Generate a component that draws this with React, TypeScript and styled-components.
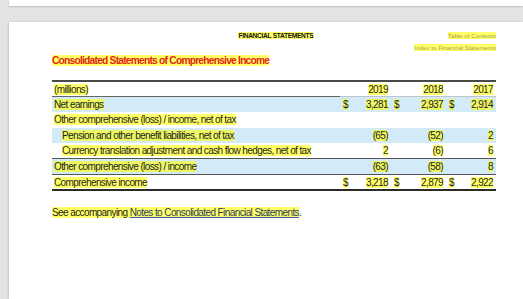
import React from "react";
import styled, { createGlobalStyle } from "styled-components";

const Global = createGlobalStyle`
  html, body { margin: 0; padding: 0; background: #e4e4e4; }
  body { font-family: "Liberation Sans", Arial, sans-serif; color: #1e1e1e; overflow: hidden; }
`;

const Desk = styled.div`
  width: 523px;
  height: 299px;
  display: flex;
  flex-direction: column;
  overflow: hidden;
`;

const PrevPage = styled.div`
  height: 6px;
  margin-left: 9px;
  background: #fff;
  box-shadow: 0 1px 2px rgba(0,0,0,0.18);
`;

const Page = styled.div`
  flex: 1;
  margin-top: 16px;
  margin-left: 9px;
  background: #fff;
  box-shadow: -1px 0 2px rgba(0,0,0,0.15);
  padding: 8px 27px 0 43px;
`;

const HL = styled.span`
  background: rgba(255, 255, 0, 0.6);
`;

const TopBar = styled.div`
  display: grid;
  grid-template-columns: 1fr auto;
  align-items: center;
  height: 10px;
`;

const RunHead = styled.div`
  font-size: 6.6px;
  font-weight: 700;
  letter-spacing: -0.3px;
  text-align: center;
  padding-left: 52px;
  color: #111;
`;

const NavLink = styled.div`
  font-size: 6.2px;
  color: #a9a356;
  text-align: right;
`;

const NavRow = styled.div`
  height: 14px;
  display: flex;
  align-items: center;
  justify-content: flex-end;
`;

const Title = styled.div`
  font-size: 10.2px;
  font-weight: 700;
  letter-spacing: -0.75px;
  color: #e2231a;
  height: 12px;
  display: flex;
  align-items: center;
`;

const Table = styled.table`
  margin-top: 14px;
  width: 444px;
  border-collapse: collapse;
  border-top: 2px solid #4a4a4a;
  border-bottom: 2px solid #2a2a2a;
  font-size: 10px;
  letter-spacing: -0.6px;
  table-layout: fixed;
`;

const Row = styled.tr<{ $blue?: boolean; $line?: boolean }>`
  height: 15.6px;
  background: ${(p) => (p.$blue ? "#d3ebf8" : "#fff")};
  ${(p) => (p.$line ? "border-bottom: 1px solid #555;" : "")}
`;

const Label = styled.td<{ $indent?: boolean; $rule?: boolean }>`
  padding: 0 0 0 ${(p) => (p.$indent ? 10 : 2)}px;
  white-space: nowrap;
  ${(p) => (p.$rule ? "border-bottom: 1px solid #666;" : "")}
`;

const Dollar = styled.td`
  padding: 0 0 0 3px;
  text-align: left;
`;

const Num = styled.td`
  padding: 0 3px 0 0;
  text-align: right;
  white-space: nowrap;
`;

const Year = styled.td`
  padding: 0 3px 0 0;
  text-align: right;
  border-bottom: 1px solid #bfc4c8;
`;

const Footer = styled.div`
  margin-top: 16px;
  font-size: 10px;
  letter-spacing: -0.6px;
  line-height: 12px;
`;

const Link = styled.span`
  background: rgba(255, 255, 0, 0.6);
  color: #2c3a63;
  text-decoration: underline;
  text-decoration-color: #3a5fb0;
`;

type Line = {
  label: string;
  blue?: boolean;
  indent?: boolean;
  line?: boolean;
  vals: (string | null)[];
  dollars?: boolean;
};

const rows: Line[] = [
  { label: "Net earnings", blue: true, vals: ["3,281", "2,937", "2,914"], dollars: true },
  { label: "Other comprehensive (loss) / income, net of tax", vals: [null, null, null] },
  { label: "Pension and other benefit liabilities, net of tax", blue: true, indent: true, vals: ["(65)", "(52)", "2"] },
  { label: "Currency translation adjustment and cash flow hedges, net of tax", indent: true, line: true, vals: ["2", "(6)", "6"] },
  { label: "Other comprehensive (loss) / income", blue: true, line: true, vals: ["(63)", "(58)", "8"] },
  { label: "Comprehensive income", vals: ["3,218", "2,879", "2,922"], dollars: true },
];

const years = ["2019", "2018", "2017"];

export default function App() {
  return (
    <>
      <Global />
      <Desk>
        <PrevPage />
        <Page>
          <TopBar>
            <RunHead>
              <HL>FINANCIAL STATEMENTS</HL>
            </RunHead>
            <NavLink>
              <HL>Table of Contents</HL>
            </NavLink>
          </TopBar>
          <NavRow>
            <NavLink>
              <HL>Index to Financial Statements</HL>
            </NavLink>
          </NavRow>
          <Title>
            <HL>Consolidated Statements of Comprehensive Income</HL>
          </Title>
          <Table>
            <colgroup>
              <col style={{ width: 288 }} />
              <col style={{ width: 10 }} />
              <col style={{ width: 41 }} />
              <col style={{ width: 10 }} />
              <col style={{ width: 45 }} />
              <col style={{ width: 10 }} />
              <col style={{ width: 40 }} />
            </colgroup>
            <tbody>
              <Row>
                <Label $rule>
                  <HL>(millions)</HL>
                </Label>
                {years.map((y) => (
                  <Year key={y} colSpan={2}>
                    <HL>{y}</HL>
                  </Year>
                ))}
              </Row>
              {rows.map((r) => (
                <Row key={r.label} $blue={r.blue} $line={r.line}>
                  <Label $indent={r.indent}>
                    <HL>{r.label}</HL>
                  </Label>
                  {r.vals.map((v, i) => (
                    <React.Fragment key={i}>
                      <Dollar>{r.dollars ? <HL>$</HL> : null}</Dollar>
                      <Num>{v ? <HL>{v}</HL> : null}</Num>
                    </React.Fragment>
                  ))}
                </Row>
              ))}
            </tbody>
          </Table>
          <Footer>
            <HL>See accompanying </HL>
            <Link>Notes to Consolidated Financial Statements</Link>.
          </Footer>
        </Page>
      </Desk>
    </>
  );
}
